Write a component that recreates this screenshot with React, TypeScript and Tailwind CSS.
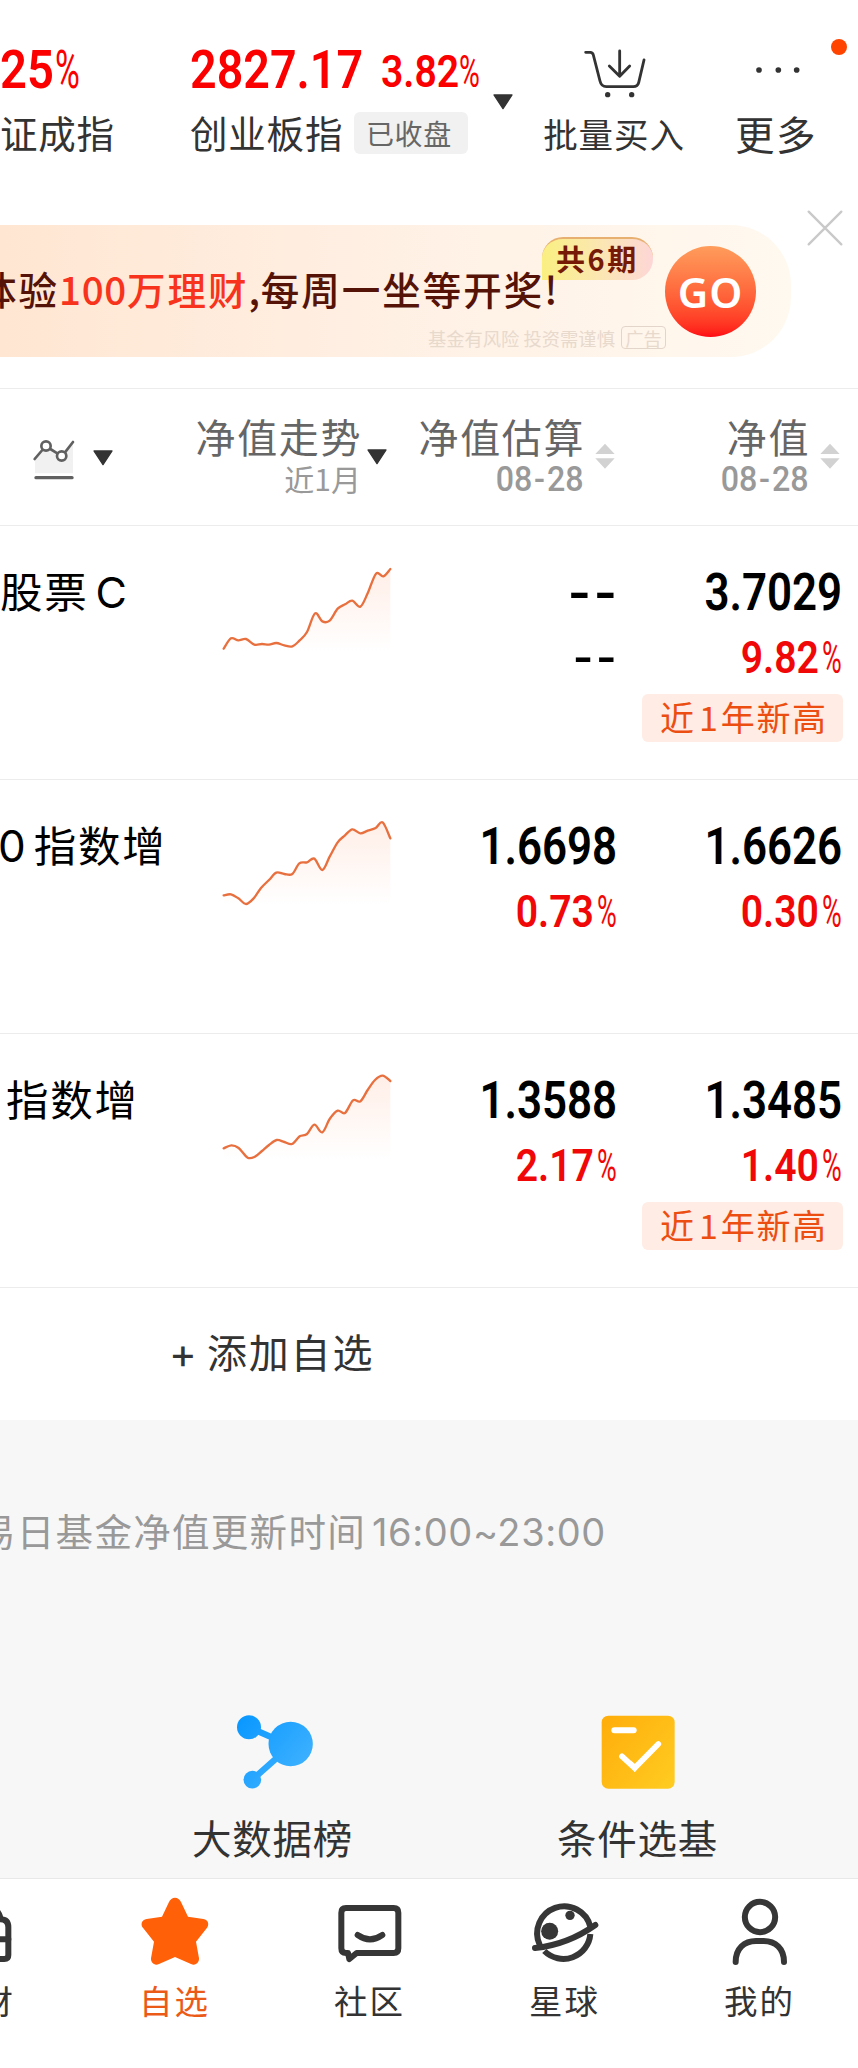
import React from "react";

const CJK = "font-['Noto_Sans_CJK_SC',sans-serif]";
const NUM = "font-[Roboto,sans-serif]";

type Point = [number, number];

function smoothPath(points: Point[]): string {
  let d = `M${points[0][0]} ${points[0][1]}`;
  for (let i = 0; i < points.length - 1; i++) {
    const p0 = points[Math.max(i - 1, 0)];
    const p1 = points[i];
    const p2 = points[i + 1];
    const p3 = points[Math.min(i + 2, points.length - 1)];
    d += ` C${p1[0] + (p2[0] - p0[0]) / 6} ${p1[1] + (p2[1] - p0[1]) / 6} ${p2[0] - (p3[0] - p1[0]) / 6} ${p2[1] - (p3[1] - p1[1]) / 6} ${p2[0]} ${p2[1]}`;
  }
  return d;
}

function Sparkline({ points, id }: { points: Point[]; id: string }) {
  const line = smoothPath(points);
  return (
    <svg className="h-[87px] w-[170px] overflow-visible" viewBox="0 0 510 261">
      <defs>
        <linearGradient id={id} x1="0" y1="0" x2="0" y2="1">
          <stop offset="0" stopColor="#ffeee7" />
          <stop offset="1" stopColor="#ffffff" />
        </linearGradient>
      </defs>
      <path d={`${line} L505 252 L5 252 Z`} fill={`url(#${id})`} />
      <path d={line} fill="none" stroke="#e8703f" strokeWidth="7" strokeLinejoin="round" strokeLinecap="round" />
    </svg>
  );
}

function Caret({ className = "" }: { className?: string }) {
  return (
    <svg className={`h-4 w-5 shrink-0 ${className}`} viewBox="0 0 60 48">
      <path d="M3 3 H57 L30 44 Z" fill="#333" stroke="#333" strokeWidth="4" strokeLinejoin="round" />
    </svg>
  );
}

function SortArrows() {
  return (
    <svg className="mt-[54px] h-[26px] w-5 shrink-0" viewBox="0 0 60 78">
      <path d="M30 2 L59 33 H1 Z M1 46 H59 L30 77 Z" fill="#d2d2d2" />
    </svg>
  );
}

function Percent({ value }: { value: string }) {
  return (
    <div className={`flex h-[70px] justify-end text-[45px] leading-[70px] font-semibold text-[#f00808] ${NUM}`}>
      <span className="origin-right scale-x-[0.87]">{value}</span>
      <span className="ml-[3px] w-[20px]">
        <span className="inline-block origin-left scale-x-[0.6] font-normal">%</span>
      </span>
    </div>
  );
}

function Dashes({ small = false }: { small?: boolean }) {
  return small ? (
    <div className={`flex h-[70px] justify-end text-[45px] leading-[70px] font-semibold ${NUM}`}>
      <span className="-mr-[3px] origin-right scale-x-[1.2] tracking-[3px]">--</span>
    </div>
  ) : (
    <div className={`flex h-[60px] justify-end text-[51px] leading-[62px] font-semibold ${NUM}`}>
      <span className="-mr-[3px] origin-right scale-x-[1.2] tracking-[3px]">--</span>
    </div>
  );
}

function Value({ value }: { value: string }) {
  return (
    <div className={`flex h-[60px] justify-end text-[51px] leading-[60px] font-semibold ${NUM}`}>
      <span className="origin-right scale-x-[0.86]">{value}</span>
    </div>
  );
}

interface Fund {
  id: string;
  prefix?: string;
  name: string;
  suffix?: string;
  nameClass: string;
  points: Point[];
  estimate?: [string, string];
  nav: [string, string];
  high?: boolean;
}

const FUNDS: Fund[] = [
  {
    id: "f1",
    name: "股票",
    suffix: "C",
    nameClass: "pl-0",
    points: [[5, 245], [27, 214], [49, 220], [72, 216], [97, 233], [120, 231], [141, 233], [163, 228], [187, 235], [211, 238], [233, 220], [255, 195], [279, 139], [301, 163], [323, 161], [347, 125], [369, 112], [391, 101], [415, 119], [437, 79], [462, 20], [484, 28], [505, 6]],
    nav: ["3.7029", "9.82"],
    high: true,
  },
  {
    id: "f2",
    prefix: "0",
    name: "指数增",
    nameClass: "-ml-[2px]",
    points: [[5, 223], [27, 220], [49, 232], [72, 249], [95, 232], [117, 201], [141, 177], [163, 155], [187, 159], [211, 159], [232, 127], [255, 124], [277, 113], [301, 147], [323, 107], [347, 64], [369, 43], [391, 25], [415, 37], [437, 29], [461, 21], [482, 4], [505, 52]],
    estimate: ["1.6698", "0.73"],
    nav: ["1.6626", "0.30"],
  },
  {
    id: "f3",
    name: "指数增",
    nameClass: "pl-[6px]",
    points: [[5, 220], [28, 211], [50, 219], [77, 248], [99, 245], [120, 228], [141, 210], [164, 195], [187, 201], [210, 207], [233, 184], [255, 177], [277, 149], [301, 172], [323, 132], [347, 107], [369, 114], [393, 76], [415, 79], [437, 45], [459, 15], [482, 2], [505, 18]],
    estimate: ["1.3588", "2.17"],
    nav: ["1.3485", "1.40"],
    high: true,
  },
];

function FundRow({ fund }: { fund: Fund }) {
  return (
    <div className="flex h-[254px] border-t border-[#ececec] text-black">
      <div className={`flex w-[222px] shrink-0 items-baseline pt-[34px] text-[42.5px] leading-[60px] tracking-[1.8px] whitespace-nowrap ${CJK}`}>
        <div className={fund.nameClass}>
          {fund.prefix && <span className="mr-[8px] font-[Inter,sans-serif] text-[44px] tracking-normal">{fund.prefix}</span>}
          <span>{fund.name}</span>
          {fund.suffix && <span className="ml-[7px] font-[Inter,sans-serif] text-[43px]">{fund.suffix}</span>}
        </div>
      </div>
      <div className="w-[170px] shrink-0 pt-[41px]">
        <Sparkline points={fund.points} id={fund.id} />
      </div>
      <div className="w-[225px] shrink-0 pt-[37px]">
        {fund.estimate ? (
          <>
            <Value value={fund.estimate[0]} />
            <Percent value={fund.estimate[1]} />
          </>
        ) : (
          <>
            <Dashes />
            <Dashes small />
          </>
        )}
      </div>
      <div className="w-[226px] shrink-0 pt-[37px]">
        <div className="pr-px">
          <Value value={fund.nav[0]} />
          <Percent value={fund.nav[1]} />
        </div>
        {fund.high && (
          <div className={`mt-px ml-auto flex h-[48px] w-[201px] rounded-md bg-[#ffece5] pl-[18px] text-[34px] leading-[45px] tracking-[1.7px] whitespace-nowrap text-[#ec4e12] ${CJK}`}>
            <span>近</span>
            <span className="w-[25px] pl-[2px] text-center">1</span>
            <span>年新高</span>
          </div>
        )}
      </div>
    </div>
  );
}

function TopBar() {
  return (
    <header className="flex h-[225px]">
      <div className="w-[190px] shrink-0 pt-[40px]">
        <div className={`flex h-[60px] text-[53px] leading-[60px] font-semibold text-[#fa0000] ${NUM}`}>
          <span className="w-[55px] origin-left scale-x-[0.89]">25</span>
          <span className="origin-left scale-x-[0.64] font-normal">%</span>
        </div>
        <div className={`mt-[7px] text-[37.5px] leading-[50px] tracking-[0.8px] text-[#333] ${CJK}`}>证成指</div>
      </div>
      <div className="w-[301px] shrink-0 pt-[40px]">
        <div className={`flex h-[60px] font-semibold text-[#fa0000] ${NUM}`}>
          <span className="w-[192px] origin-left scale-x-[0.88] text-[53px] leading-[60px]">2827.17</span>
          <span className="-ml-px flex text-[44.5px] leading-[64px]">
            <span className="w-[78px] origin-left scale-x-[0.88]">3.82</span>
            <span className="w-[20px] origin-left scale-x-[0.64] font-normal">%</span>
          </span>
        </div>
        <div className={`mt-[7px] flex items-start ${CJK}`}>
          <span className="w-[164px] text-[37.5px] leading-[50px] tracking-[0.8px] text-[#333]">创业板指</span>
          <span className="mt-[5px] h-[42px] w-[114px] rounded-md bg-[#f1f1f1] pl-[12px] text-[28px] leading-[42px] tracking-[0.6px] text-[#666]">已收盘</span>
        </div>
      </div>
      <Caret className="mt-[94px] ml-[2px]" />
      <div className="ml-[26px] flex w-[150px] shrink-0 flex-col items-center pt-[48px]">
        <svg className="ml-px h-[51px] w-[64px]" viewBox="458 146 192 153" fill="none" stroke="#333" strokeWidth="8.5" strokeLinecap="round" strokeLinejoin="round">
          <path d="M466 159 H480 Q487 159 489 167 L509 245 Q513 262 528 262 H609 Q622 262 625 250 L641 182" />
          <path d="M568 155 V231 M537 200 L568 231 L598 200" />
          <circle cx="532" cy="286" r="8" fill="#333" stroke="none" />
          <circle cx="604" cy="286" r="8" fill="#333" stroke="none" />
        </svg>
        <span className={`mt-[9px] text-[34.5px] leading-[50px] tracking-[0.9px] whitespace-nowrap text-[#333] ${CJK}`}>批量买入</span>
      </div>
      <div className="relative ml-[12px] flex w-[150px] shrink-0 flex-col items-center pt-[60px]">
        <svg className="ml-[4px] h-[20px] w-[46px]" viewBox="974 179 138 60" fill="#333">
          <circle cx="986" cy="209" r="8.5" />
          <circle cx="1044" cy="209" r="8.5" />
          <circle cx="1099" cy="209" r="8.5" />
        </svg>
        <span className={`mt-[27px] text-[39.5px] leading-[52px] tracking-[1.5px] text-[#333] ${CJK}`}>更多</span>
        <span className="absolute top-[39px] left-[130px] size-4 rounded-full bg-[#ff4400]" />
        <svg className="absolute top-[209px] left-[105px] size-[38px]" viewBox="0 0 114 114" stroke="#c9c9c9" strokeWidth="7" strokeLinecap="round">
          <path d="M8 8 L106 106 M106 8 L8 106" />
        </svg>
      </div>
    </header>
  );
}

function Banner() {
  return (
    <div className="h-[163px]">
      <div className={`relative h-[132px] w-[791px] overflow-hidden rounded-r-[60px] bg-linear-to-r from-[#ffe6d2] via-[#fff0e4] to-[#fff9f0] ${CJK}`}>
        <div className="absolute top-[12px] left-[542px] h-[43px] w-[111px] rounded-[21px] rounded-bl-none border-t-2 border-[#e8b070] bg-linear-to-r from-[#faef80] via-[#fbe7b0] to-[#fdd6d6] pl-[14px] text-[29px] leading-[39px] font-bold whitespace-nowrap text-[#761a06]">
          共<span className="mx-[2.5px]">6</span>期
        </div>
        <div className="relative -ml-[22px] pt-[33px] text-[38.5px] leading-[60px] font-medium tracking-[2px] whitespace-nowrap text-[#551206]">
          体验<span className="text-[#f7331d]"><span className="tracking-[0.7px]">100</span>万理财</span>
          <span className="tracking-[0.8px]">,</span>每周一坐等开奖<span>!</span>
        </div>
        <div className="absolute top-[101px] left-[428px] flex items-center text-[18.3px] leading-[22px] whitespace-nowrap text-[#e8d9cd]">
          <span>基金有风险&nbsp;投资需谨慎</span>
          <span className="ml-[6px] flex h-[23px] w-[45px] items-center justify-center rounded border border-[#e3d5ca]">广告</span>
        </div>
        <div className="absolute top-[21px] left-[665px] flex size-[91px] items-center justify-center rounded-full bg-linear-to-b from-[#ff9c5c] to-[#ff0515] font-['Noto_Sans',sans-serif] text-[42px] leading-none font-semibold tracking-[1px] text-white">
          GO
        </div>
      </div>
    </div>
  );
}

function DateLabel() {
  return (
    <div className={`mt-[3px] flex justify-end text-[35px] leading-[36px] font-medium text-[#999] ${NUM}`}>
      <span className="origin-right scale-x-[0.92]">
        08<span className="mx-[2px]">-</span>28
      </span>
    </div>
  );
}

function TableHead() {
  const title = `-mr-[2px] text-[40px] leading-[46px] tracking-[1.6px] whitespace-nowrap text-[#666] ${CJK}`;
  return (
    <div className="flex h-[137px] border-t border-[#ececec]">
      <svg className="mt-[49px] ml-[32px] h-[44px] w-[44px] shrink-0" viewBox="96 714 132 132" fill="none" stroke="#606060" strokeWidth="8" strokeLinecap="round">
        <path d="M105 778 L138 738 L185 768 L219 728 V820 H105 Z" fill="#f1f1f1" stroke="none" />
        <path d="M104 777 L127 750 M151 747 L172 760 M195 757 L219 726" />
        <circle cx="138" cy="738" r="14" fill="#fff" />
        <circle cx="185" cy="768" r="14" fill="#fff" />
        <path d="M108 833 H216" strokeWidth="10" />
      </svg>
      <Caret className="mt-[61px] ml-[17px]" />
      <div className="w-[247px] shrink-0 pt-[24px] text-right">
        <div className={title}>净值走势</div>
        <div className={`-mr-[1px] text-[30px] leading-[38px] text-[#999] ${CJK}`}>
          近1月
        </div>
      </div>
      <Caret className="mt-[60px] ml-[7px]" />
      <div className="mr-[12px] w-[196px] shrink-0 pt-[24px] text-right">
        <div className={title}>净值估算</div>
        <DateLabel />
      </div>
      <SortArrows />
      <div className="mr-[12px] w-[193px] shrink-0 pt-[24px] text-right">
        <div className={title}>净值</div>
        <DateLabel />
      </div>
      <SortArrows />
    </div>
  );
}

function Shortcuts() {
  const label = `mt-[20px] text-[39.5px] leading-[54px] tracking-[0.8px] whitespace-nowrap text-[#333] ${CJK}`;
  return (
    <div className="flex">
      <div className="ml-[90px] flex w-[365px] flex-col items-center">
        <svg className="ml-[4px] h-[76px] w-[78px]" viewBox="708 793 234 228">
          <defs>
            <linearGradient id="blue" gradientUnits="userSpaceOnUse" x1="720" y1="810" x2="900" y2="960">
              <stop offset="0" stopColor="#0a98ff" />
              <stop offset="1" stopColor="#3cb0ff" />
            </linearGradient>
          </defs>
          <path d="M747 833 L872 888 L757 990" fill="none" stroke="url(#blue)" strokeWidth="19" />
          <g fill="url(#blue)">
            <circle cx="747" cy="833" r="36" />
            <circle cx="872" cy="883" r="66.5" />
            <circle cx="757" cy="990" r="26.5" />
          </g>
        </svg>
        <span className={label}>大数据榜</span>
      </div>
      <div className="flex w-[365px] flex-col items-center">
        <svg className="ml-px h-[76px] w-[76px]" viewBox="511 192 228 228">
          <defs>
            <linearGradient id="gold" x1="0" y1="0.1" x2="1" y2="0.9">
              <stop offset="0" stopColor="#ffae0c" />
              <stop offset="1" stopColor="#ffcb20" />
            </linearGradient>
          </defs>
          <rect x="516" y="197" width="219" height="219" rx="20" fill="url(#gold)" />
          <path d="M554 241 H612" stroke="#fff" strokeWidth="18" strokeLinecap="round" />
          <path d="M577 319 L615 354 L686 282" fill="none" stroke="#fff" strokeWidth="17" strokeLinecap="round" strokeLinejoin="miter" />
          <path d="M603 331 L615 341 L628 350 L615 367 Z" fill="#fff" />
        </svg>
        <span className={label}>条件选基</span>
      </div>
    </div>
  );
}

function Tab({ label, viewBox, active = false, children }: { label: string; viewBox: string; active?: boolean; children: React.ReactNode }) {
  return (
    <div className={`flex w-[195px] shrink-0 flex-col items-center pt-[16px] ${active ? "text-[#ec5a18]" : "text-[#333]"}`}>
      <svg className="size-[72px]" viewBox={viewBox} fill="none" stroke="#363636" strokeWidth="18" strokeLinecap="round" strokeLinejoin="round">
        {children}
      </svg>
      <span className={`mt-[8px] text-[33.5px] leading-[50px] tracking-[2px] ${CJK}`}>{label}</span>
    </div>
  );
}

function TabBar() {
  return (
    <nav className="-ml-[118px] flex h-[190px] w-[976px] border-t border-[#e8e8e8] bg-white">
      <Tab label="理财" viewBox="-166 105 216 216">
        <path d="M-143 202 Q-143 178 -119 178 H3 Q27 178 27 202 V285 Q27 297 15 297 H-131 Q-143 297 -143 285 Z" />
        <path d="M-143 238 H27 M-110 174 Q-95 136 -58 136 Q-8 136 2 170" />
      </Tab>
      <Tab label="自选" viewBox="419 105 216 216" active>
        <path
          stroke="none"
          fill="#ff6008"
          d="M527 113 C535 113 541 118 545 126 L566 170 L612 177 C627 179 631 194 622 205 L590 245 L599 295 C600 309 588 318 575 312 L527 291 L479 312 C466 318 454 309 455 295 L464 245 L432 205 C422 194 427 179 442 177 L488 170 L509 126 C513 118 519 113 527 113 Z"
        />
      </Tab>
      <Tab label="社区" viewBox="1004 105 216 216">
        <path d="M1046 279 H1040 Q1026 279 1026 265 V158 Q1026 144 1040 144 H1183 Q1197 144 1197 158 V265 Q1197 279 1183 279 H1072 L1050 297 Z" />
        <path d="M1075 225 Q1112 251 1149 225" />
      </Tab>
      <Tab label="星球" viewBox="299 105 216 216">
        <path d="M331 254 A81 81 0 1 1 483 200" />
        <path d="M483 222 A81 81 0 0 1 345 273" strokeLinecap="butt" />
        <path d="M317 264 Q415 254 498 195" />
        <circle cx="361" cy="214" r="25.5" fill="#363636" stroke="none" />
        <circle cx="422" cy="166" r="14" fill="#363636" stroke="none" />
      </Tab>
      <Tab label="我的" viewBox="884 105 216 216">
        <circle cx="992" cy="171" r="45.5" />
        <path d="M919 306 C919 265 945 243 980 243 H1003 C1038 243 1064 265 1064 306" />
      </Tab>
    </nav>
  );
}

export default function App() {
  return (
    <div className="h-[2068px] w-[858px] overflow-hidden bg-white">
      <TopBar />
      <Banner />
      <TableHead />
      {FUNDS.map((fund) => (
        <FundRow key={fund.id} fund={fund} />
      ))}
      <div className={`flex h-[133px] border-t border-[#ececec] pt-[33px] pl-[169px] text-[40px] leading-[61px] tracking-[1.8px] text-[#333] ${CJK}`}>
        <span className="w-[38px] font-[Inter,sans-serif] text-[42px] leading-[64px] tracking-normal">+</span>
        <span>添加自选</span>
      </div>
      <div className="h-[458px] bg-[#f7f7f7] pt-[80px]">
        <div className={`-ml-[22px] h-[60px] text-[37.5px] leading-[60px] tracking-[1.3px] whitespace-nowrap text-[#999] ${CJK}`}>
          易日基金净值更新时间<span className="ml-[6px] font-[Inter,sans-serif] text-[38px] tracking-[0.6px]">16:00~23:00</span>
        </div>
        <div className="pt-[154px]">
          <Shortcuts />
        </div>
      </div>
      <TabBar />
    </div>
  );
}
